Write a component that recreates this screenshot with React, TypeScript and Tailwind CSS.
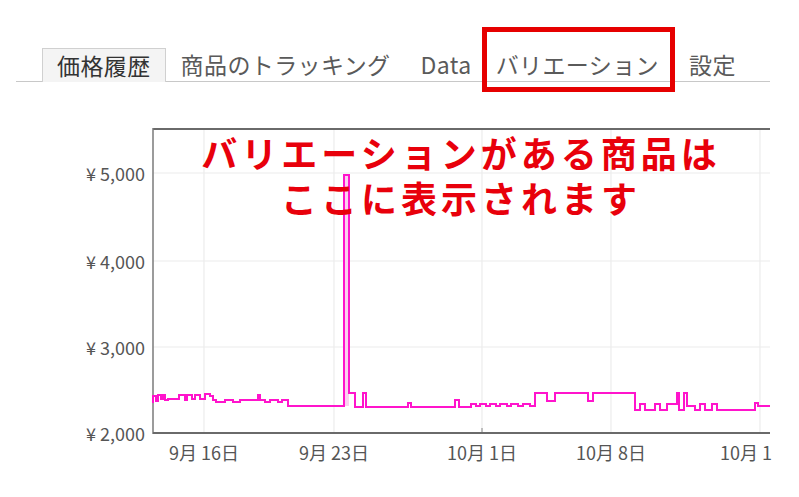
import React from "react";

const FONT = '"Noto Sans CJK JP", "Noto Sans", sans-serif';

const linePath =
  "M153,403 L153,396 L156,396 L156,401 L158,401 L158,395 L161,395 L161,399 L163,399 L163,395 L165,395 L165,400 L168,400 L168,399 L179,399 L179,395 L185,395 L185,400 L187,400 L187,395 L192,395 L192,399 L195,399 L195,395 L200,395 L200,399 L205,399 L205,394 L210,394 L210,396 L213,396 L213,400 L216,400 L216,402 L225,402 L225,400 L233,400 L233,402 L240,402 L240,400 L258,400 L258,395 L260,395 L260,400 L265,400 L265,402 L270,402 L270,400 L278,400 L278,402 L282,402 L282,400 L288,400 L288,406 L344,406 " +
  "L344,175 L349,175 L349,393 L355,393 L355,407 L363,407 L363,393 L366,393 L366,407 L408,407 L408,403 L411,403 L411,407 L455,407 L455,400 L459,400 L459,407 L471,407 L471,404 L476,404 L476,406 L480,406 L480,404 L486,404 L486,406 L490,406 L490,404 L496,404 L496,406 L500,406 L500,404 L507,404 L507,406 L511,406 L511,404 L518,404 L518,406 L523,406 L523,404 L530,404 L530,406 L535,406 L535,393 L547,393 L547,401 L555,401 L555,393 L588,393 L588,401 L593,401 L593,393 L635,393 L635,410 L640,410 L640,404 L645,404 L645,410 L655,410 L655,404 L660,404 L660,410 L667,410 L667,404 L677,404 L677,393 L679,393 L679,410 L684,410 L684,393 L687,393 L687,406 L695,406 L695,410 L700,410 L700,404 L705,404 L705,410 L712,410 L712,404 L717,404 L717,410 L755,410 L755,403 L758,403 L758,406 L770,406";

function Tabs() {
  return (
    <div className="pt-[48px] pl-[16px]">
      <div className="flex w-[754px] h-[34px] border-b border-[#c8c8c8] text-[23px] leading-[32px] tracking-[0.4px]">
        <div className="w-[26px]" />
        <div className="px-[14px] bg-[#f4f4f4] border-l border-r border-t border-[#d0d0d0] text-[#333] -mb-px">
          価格履歴
        </div>
        <div className="px-[15px] text-[#5a5a5a]">商品のトラッキング</div>
        <div className="pl-[15px] pr-[12px] text-[#5a5a5a]">Data</div>
        <div className="relative pl-[12px] pr-[15px] text-[#5a5a5a]">
          バリエーション
          <div className="absolute left-[-2px] right-[-1px] top-[-21px] bottom-[-11px] border-[5px] border-[#e60000]" />
        </div>
        <div className="px-[15px] text-[#5a5a5a]">設定</div>
      </div>
    </div>
  );
}

function Chart() {
  const hGrid = [173, 261, 347];
  const vGrid = [204, 334, 482, 611, 760];
  const yLabels: [string, number][] = [
    ["¥ 5,000", 173],
    ["¥ 4,000", 261],
    ["¥ 3,000", 347],
    ["¥ 2,000", 433],
  ];
  const xLabels: [string, number][] = [
    ["9月 16日", 204],
    ["9月 23日", 334],
    ["10月 1日", 482],
    ["10月 8日", 611],
    ["10月 15日", 760],
  ];
  return (
    <svg
      width={799}
      height={415}
      viewBox="0 82 799 415"
      className="block"
      style={{ fontFamily: FONT }}
    >
      <defs>
        <clipPath id="cl">
          <rect x={0} y={82} width={772} height={415} />
        </clipPath>
      </defs>
      {hGrid.map((y) => (
        <line key={y} x1={153} x2={770} y1={y} y2={y} stroke="#ececec" strokeWidth={1.2} />
      ))}
      {vGrid.map((x) => (
        <line key={x} x1={x} x2={x} y1={129} y2={433} stroke="#ececec" strokeWidth={1.2} />
      ))}
      <line x1={153} x2={770} y1={129} y2={129} stroke="#6a6a6a" strokeWidth={2} />
      <line x1={153} x2={153} y1={128} y2={434} stroke="#7a7a7a" strokeWidth={1.5} />
      <rect x={344} y={175} width={5} height={231} fill="#fbd0f0" />
      <path d={linePath} fill="none" stroke="#ff14cc" strokeWidth={2} strokeLinejoin="miter" />
      <line x1={153} x2={770} y1={433} y2={433} stroke="#6a6a6a" strokeWidth={2} />
      <line x1={482} x2={482} y1={428} y2={432} stroke="#888" strokeWidth={1} />
      {yLabels.map(([t, y]) => (
        <text key={t} x={145} y={y} textAnchor="end" dominantBaseline="central" fontSize={18} fill="#555">
          {t}
        </text>
      ))}
      <g clipPath="url(#cl)">
        {xLabels.map(([t, x]) => (
          <text key={t} x={x} y={452} textAnchor="middle" dominantBaseline="central" fontSize={18} fill="#555">
            {t}
          </text>
        ))}
      </g>
    </svg>
  );
}

export default function App() {
  return (
    <div className="relative w-[799px] h-[497px] bg-white overflow-hidden" style={{ fontFamily: FONT }}>
      <Tabs />
      <Chart />
      <div className="absolute left-[198px] top-[130px] w-[526px] text-center text-[36px] leading-[45px] font-bold text-[#e8000b] tracking-[4px]">
        <div>バリエーションがある商品は</div>
        <div>ここに表示されます</div>
      </div>
    </div>
  );
}
